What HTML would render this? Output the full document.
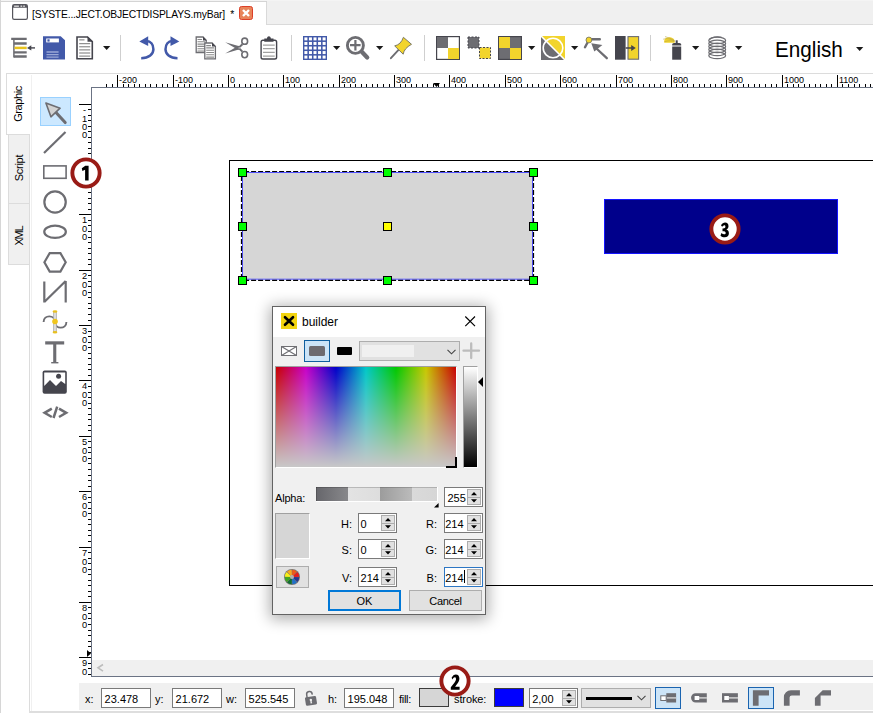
<!DOCTYPE html>
<html><head><meta charset="utf-8"><title>editor</title>
<style>

html,body{margin:0;padding:0;}
body{width:873px;height:713px;overflow:hidden;background:#fff;position:relative;font-family:"Liberation Sans",sans-serif;font-size:11px;color:#000;}
.a{position:absolute;}
svg{position:absolute;overflow:visible;}


.tabstrip{left:0;top:0;width:873px;height:25px;background:#f0f0f0;}
.tabstrip .topline{left:0;top:1px;width:267px;height:1px;background:#d4d4d4;}
.tabstrip .top0{left:0;top:0;width:873px;height:1px;background:#f4f4f4;}
.tabstrip .botline{left:267px;top:24px;width:606px;height:1px;background:#dadada;}
.doctab{left:0;top:2px;width:267px;height:23px;background:#fff;border-right:1px solid #d9d9d9;box-sizing:border-box;}
.doctitle{left:32.3px;top:7.4px;font-size:11.8px;line-height:14px;white-space:nowrap;letter-spacing:-0.2px;color:#000;transform-origin:0 50%;transform:scaleX(0.876);}
.closebtn{left:239px;top:6px;width:14px;height:14px;box-sizing:border-box;background:#e8845a;border:1px solid #dc3f28;border-radius:2.5px;}
.tsep{width:1px;top:35px;height:26px;background:#cfcfcf;}
.dd{width:0;height:0;border-left:3.7px solid transparent;border-right:3.7px solid transparent;border-top:4px solid #1c1c1c;top:46px;}
.lang{left:775.2px;top:36.7px;font-size:22px;line-height:26px;color:#000;white-space:nowrap;transform-origin:0 50%;transform:scaleX(0.94);}
.winedge{left:0;top:0;width:1px;height:713px;background:#d6d6d6;}


.hline73{left:6px;top:73px;width:867px;height:1px;background:#dcdcdc;}
.vline6{left:6px;top:73px;width:1px;height:62px;background:#dcdcdc;}
.vline31{left:31px;top:75px;width:1px;height:638px;background:#f0f0f0;}
.vline29{left:29px;top:264px;width:1px;height:449px;background:#dcdcdc;}
.hline134{left:6px;top:134px;width:24px;height:1px;background:#dcdcdc;}
.vtab{left:8px;width:22px;background:#f0f0f0;border:1px solid #dcdcdc;box-sizing:border-box;}
.vtxt{font-size:11px;line-height:13px;white-space:nowrap;transform:translate(-50%,-50%) rotate(-90deg);color:#000;}
.toolsel{left:40px;top:97px;width:31px;height:29px;box-sizing:border-box;background:#cce8ff;border:1px solid #99d1ff;}


.frameL{left:91px;top:87px;width:1px;height:590px;background:#6b7384;}
.frameT{left:91px;top:87px;width:782px;height:1px;background:#6b7384;}
.frameB{left:91px;top:676px;width:782px;height:1px;background:#6b7384;}
.hscroll{left:92px;top:660px;width:781px;height:16px;background:#f0f0f0;}
.rl{font-size:9px;color:#000;white-space:nowrap;}
.hl{top:74.7px;line-height:11px;}
.vl{left:80px;width:9px;text-align:center;line-height:8.2px;font-size:9.3px;}
.vclip{left:72px;top:88px;width:19px;height:588px;overflow:hidden;}


.page{left:229px;top:160px;width:700px;height:426px;box-sizing:border-box;border:1px solid #000;border-right:none;}
.hd{width:9px;height:9px;box-sizing:border-box;border:1px solid #000;background:#00ff00;}
.badge{width:31px;height:31px;box-sizing:border-box;border:4px solid #991b16;border-radius:50%;background:#fff;}
.badge span{position:absolute;left:0;top:0;width:23px;height:23px;line-height:23px;text-align:center;font-weight:bold;font-size:20px;transform:scaleX(0.78);color:#000;}


.dlg{left:272px;top:306px;width:214px;height:309px;box-sizing:border-box;border:1px solid #636363;background:#f0f0f0;box-shadow:0 2px 14px 2px rgba(0,0,0,0.33);}
.dlgtitle{left:273px;top:307px;width:212px;height:30px;background:#fff;}
.dlgtxt{left:302px;top:315px;font-size:12px;line-height:15px;color:#000;}
.lbl{font-size:11px;line-height:13px;white-space:nowrap;color:#000;}
.spin{box-sizing:border-box;border:1px solid #7a7a7a;background:#fff;height:20px;}
.spin .t{position:absolute;left:2px;top:3px;font-size:11px;line-height:14px;white-space:nowrap;}
.spin .bt{position:absolute;right:1px;top:1px;width:14px;height:16px;box-sizing:border-box;border:1px solid #adadad;background:#e1e1e1;}
.spin .bt:before{content:"";position:absolute;left:0;top:7px;width:12px;height:1px;background:#adadad;}
.spin svg{right:4.7px;top:3.8px;}
.btn{box-sizing:border-box;border:1px solid #adadad;background:#e1e1e1;font-size:11px;text-align:center;color:#000;}
.sunk{box-sizing:border-box;border:1px solid;border-color:#a0a0a0 #fff #fff #a0a0a0;}


.bbar{left:79px;top:683px;width:794px;height:27px;background:#f0f0f0;}
.bline{left:29px;top:711px;width:844px;height:2px;background:#dedede;}
.inp{box-sizing:border-box;border:1px solid #7a7a7a;background:#fff;height:20px;top:688px;font-size:11px;line-height:20px;padding-left:2.6px;white-space:nowrap;}
.sw{box-sizing:border-box;border:1px solid #3c3c3c;top:688px;height:19px;width:30px;}
.bsel{box-sizing:border-box;background:#cce4f7;border:1px solid #1a64b0;top:687px;width:26px;height:22px;}

</style></head>
<body>

<div class="a tabstrip"><div class="a top0"></div><div class="a topline"></div><div class="a botline"></div>
<div class="a doctab"></div></div>
<svg style="left:12px;top:4px" width="16" height="16" viewBox="0 0 16 16">
<rect x="0.6" y="0.7" width="14.8" height="14.6" rx="1.6" fill="#fff" stroke="#55555c" stroke-width="1.2"/>
<path d="M0.6 2.2Q0.6 0.7 2.2 0.7H13.8Q15.4 0.7 15.4 2.2V3.7H0.6z" fill="#55555c"/><rect x="2.1" y="1.5" width="4.8" height="1.4" fill="#d8d8d8"/><rect x="8.5" y="1.5" width="1.7" height="1.4" fill="#d8d8d8"/><rect x="11.2" y="1.5" width="1.7" height="1.4" fill="#d8d8d8"/>
</svg>
<div class="a doctitle">[SYSTE...JECT.OBJECTDISPLAYS.myBar]<span style="margin-left:6px">*</span></div>
<div class="a closebtn"></div><svg style="left:239px;top:6px" width="14" height="14" viewBox="0 0 14 14"><path d="M4 4L10 10M10 4L4 10" stroke="#fff" stroke-width="2.4"/></svg>
<svg style="left:11px;top:36px" width="26" height="24" viewBox="11 36 26 24">
<path d="M13.9 38.2V57.5" stroke="#6d6d72" stroke-width="1.5"/>
<g fill="none" stroke="#6d6d72" stroke-width="2.3"><path d="M11.2 38.9H26.7M13.9 43.5H26.7M13.9 52.3H26.7M13.9 56.5H26.7"/></g>
<path d="M14.6 47.9H26.7" stroke="#e8c31e" stroke-width="2.5"/>
<path d="M29 47.9H35" stroke="#45454d" stroke-width="1.4"/><path d="M27 47.9l4.3-2.7v5.4z" fill="#45454d"/>
</svg>
<svg style="left:43px;top:36px" width="23" height="24" viewBox="43 36 23 24">
<path d="M43 36.2H60.7L65 40.3V59.6H43z" fill="#4259a9"/>
<rect x="46.2" y="38.5" width="12.7" height="3.9" fill="#fff"/><rect x="47.4" y="39.3" width="2.2" height="2.3" fill="#4259a9"/>
<path d="M46.5 52H58.6M46.5 54.7H58.6M46.5 57.2H58.6" stroke="#9aa8d6" stroke-width="1.3"/>
</svg>
<svg style="left:76px;top:36px" width="18" height="24" viewBox="76 36 18 24">
<path d="M77 37H87.5L92.3 41.7V58.8H77z" fill="#fff" stroke="#45454d" stroke-width="1.6"/>
<path d="M87.5 36.5V41.7H93z" fill="#45454d"/>
<path d="M79.2 39.9H84.5M79.2 43.7H90.2M79.2 46.8H90.2M79.2 49.9H90.2M79.2 53H90.2M79.2 56.1H90.2" stroke="#777" stroke-width="1"/>
</svg>
<svg style="left:138px;top:35px" width="18" height="26" viewBox="138 35 18 26">
<path d="M141.2 58.3C149 58.3 153.4 54 153.4 49.2C153.4 44.5 150.5 41.2 146.5 41" fill="none" stroke="#4259a9" stroke-width="2.5"/>
<path d="M139.3 41.4L148.2 36.2V46z" fill="#4259a9"/></svg>
<svg style="left:163px;top:35px" width="18" height="26" viewBox="163 35 18 26">
<path d="M177.5 58.3C169.7 58.3 165.5 54 165.5 49.2C165.5 44.5 168.3 41.2 172.3 41" fill="none" stroke="#4259a9" stroke-width="2.5"/>
<path d="M179.3 41.4L170.5 36.2V46z" fill="#4259a9"/></svg>
<svg style="left:194px;top:36px" width="23" height="24" viewBox="194 36 23 24">
<path d="M196.2 37H203L206.2 40.2V52.5H196.2z" fill="#fff" stroke="#6d6d72" stroke-width="1.3"/><path d="M203 36.6V40.4H206.8z" fill="#45454d"/>
<path d="M197.5 39.5H202M197.5 41.8H205M197.5 44.1H205M197.5 46.4H205M197.5 48.7H205M197.5 51H205" stroke="#8a8a8a" stroke-width="1.1"/>
<path d="M204.8 43H212L215.4 46.4V58.8H204.8z" fill="#fff" stroke="#6d6d72" stroke-width="1.3"/><path d="M212 42.6V46.6H216z" fill="#45454d"/>
<path d="M206.2 45.6H211M206.2 47.9H214M206.2 50.2H214M206.2 52.5H214M206.2 54.8H214M206.2 57.1H214" stroke="#8a8a8a" stroke-width="1.1"/>
</svg>
<svg style="left:225px;top:37px" width="25" height="22" viewBox="225 37 25 22">
<path d="M225.2 42.2L240.4 46.6L238.4 50z" fill="#6d6d72"/>
<path d="M225.2 53.5L240.4 49.1L238.4 45.7z" fill="#6d6d72"/>
<path d="M238.6 47.9L242.4 44.2M238.6 47.9L242.4 51.6" stroke="#6d6d72" stroke-width="2"/>
<ellipse cx="244.7" cy="41.2" rx="2.9" ry="3.1" fill="#fff" stroke="#6d6d72" stroke-width="1.6"/>
<ellipse cx="244.7" cy="54.6" rx="2.9" ry="3.1" fill="#fff" stroke="#6d6d72" stroke-width="1.6"/>
<circle cx="239.2" cy="47.9" r="0.7" fill="#ddd"/>
</svg>
<svg style="left:260px;top:36px" width="18" height="24" viewBox="260 36 18 24">
<rect x="261.1" y="40.2" width="15.5" height="18.8" rx="1.8" fill="#fff" stroke="#45454d" stroke-width="1.4"/>
<path d="M264.3 41.7V38.6H266.9C267.4 35.6 270.4 35.6 270.9 38.6H273.5V41.7z" fill="#45454d"/>
<path d="M263 45.2H274.7M263 48.6H274.7M263 52.3H274.7M263 56.1H274.7" stroke="#a2a2a2" stroke-width="1.2"/>
</svg>
<svg style="left:303px;top:36px" width="24" height="24" viewBox="0 0 24 24"><rect width="24" height="24" fill="#4259a9"/><rect x="1.4" y="1.4" width="3" height="3" fill="#fff"/><rect x="5.95" y="1.4" width="3" height="3" fill="#fff"/><rect x="10.5" y="1.4" width="3" height="3" fill="#fff"/><rect x="15.05" y="1.4" width="3" height="3" fill="#fff"/><rect x="19.6" y="1.4" width="3" height="3" fill="#fff"/><rect x="1.4" y="5.95" width="3" height="3" fill="#fff"/><rect x="5.95" y="5.95" width="3" height="3" fill="#fff"/><rect x="10.5" y="5.95" width="3" height="3" fill="#fff"/><rect x="15.05" y="5.95" width="3" height="3" fill="#fff"/><rect x="19.6" y="5.95" width="3" height="3" fill="#fff"/><rect x="1.4" y="10.5" width="3" height="3" fill="#fff"/><rect x="5.95" y="10.5" width="3" height="3" fill="#fff"/><rect x="10.5" y="10.5" width="3" height="3" fill="#fff"/><rect x="15.05" y="10.5" width="3" height="3" fill="#fff"/><rect x="19.6" y="10.5" width="3" height="3" fill="#fff"/><rect x="1.4" y="15.05" width="3" height="3" fill="#fff"/><rect x="5.95" y="15.05" width="3" height="3" fill="#fff"/><rect x="10.5" y="15.05" width="3" height="3" fill="#fff"/><rect x="15.05" y="15.05" width="3" height="3" fill="#fff"/><rect x="19.6" y="15.05" width="3" height="3" fill="#fff"/><rect x="1.4" y="19.6" width="3" height="3" fill="#fff"/><rect x="5.95" y="19.6" width="3" height="3" fill="#fff"/><rect x="10.5" y="19.6" width="3" height="3" fill="#fff"/><rect x="15.05" y="19.6" width="3" height="3" fill="#fff"/><rect x="19.6" y="19.6" width="3" height="3" fill="#fff"/></svg>
<svg style="left:345px;top:35px" width="26" height="26" viewBox="345 35 26 26">
<circle cx="355.4" cy="45.4" r="8" fill="#fff" stroke="#6d6d72" stroke-width="2.9"/>
<path d="M361.8 51.8L367.2 57.4" stroke="#6d6d72" stroke-width="4.3" stroke-linecap="round"/>
<path d="M355.4 40V50.4M350 45.2H360.6" stroke="#6d6d72" stroke-width="2.2"/>
</svg>
<svg style="left:389px;top:36px" width="24" height="24" viewBox="389 36 24 24">
<path d="M390.9 58.2L399 49.4" stroke="#6d6d72" stroke-width="1.9" stroke-linecap="round"/>
<path d="M394.7 45.9L403.2 54.2Q404 48.4 411.5 44.3L403.4 37.3Q400.9 44.6 394.7 45.9z" fill="#f2d42c" stroke="#7c7a66" stroke-width="1" stroke-linejoin="round"/>
</svg>
<svg style="left:436px;top:36px" width="24" height="24" viewBox="0 0 24 24">
<rect x="0.6" y="0.6" width="22.8" height="22.8" fill="#fff" stroke="#45454d" stroke-width="1.2"/>
<rect x="1" y="1" width="11" height="11" fill="#6d6d72"/><rect x="12" y="12" width="11" height="11" fill="#f2d42c"/>
</svg>
<svg style="left:467px;top:36px" width="25" height="24" viewBox="0 0 25 24">
<rect x="1" y="1" width="11" height="11" fill="#6d6d72" stroke="#45454d" stroke-width="1" stroke-dasharray="2 1.5"/>
<rect x="12.5" y="11.5" width="11" height="11" fill="#f2d42c" stroke="#45454d" stroke-width="1" stroke-dasharray="2 1.5"/>
</svg>
<svg style="left:498px;top:36px" width="24" height="24" viewBox="0 0 24 24">
<rect x="0.6" y="0.6" width="22.8" height="22.8" fill="#6d6d72" stroke="#45454d" stroke-width="1.2"/>
<rect x="1" y="1" width="11" height="11" fill="#f2d42c"/><rect x="12" y="12" width="11" height="11" fill="#f2d42c"/>
</svg>
<svg style="left:541px;top:36px" width="24" height="24" viewBox="0 0 24 24">
<path d="M0 0H24V24z" fill="#f2d42c"/><path d="M0 0V24H24z" fill="#6d6d72"/>
<circle cx="12" cy="12" r="9.8" fill="none" stroke="#fff" stroke-width="1.6"/>
<path d="M0 0L24 24" stroke="#fff" stroke-width="1.6"/>
</svg>
<svg style="left:584px;top:36px" width="25" height="24" viewBox="584 36 25 24">
<path d="M585 47.2L588.9 40M588.9 39.3H599.8" stroke="#6d6d72" stroke-width="2.4" fill="none" stroke-linecap="round"/>
<circle cx="588.9" cy="40" r="2.9" fill="#f2d42c" stroke="#7c7a66" stroke-width="0.9"/>
<path d="M597 49L606.8 58.2" stroke="#6d6d72" stroke-width="2.3" stroke-linecap="round"/>
<path d="M591.3 43.2L602.4 45L594.3 51.5z" fill="#6d6d72"/>
</svg>
<svg style="left:615px;top:36px" width="24" height="24" viewBox="615 36 24 24">
<rect x="615" y="36" width="10.6" height="23.7" fill="#45454d"/>
<rect x="628" y="36.6" width="10.6" height="22.6" fill="#f2d42c" stroke="#6d6d72" stroke-width="1.1"/>
<path d="M625.6 48H632" stroke="#45454d" stroke-width="1.5"/><path d="M635.8 48L631.2 45V51z" fill="#45454d"/>
</svg>
<svg style="left:662px;top:36px" width="21" height="24" viewBox="662 36 21 24">
<rect x="672.2" y="46.5" width="9" height="13.2" fill="#45454d"/>
<path d="M672.2 45.6V44.6Q672.2 43 674 43H679.4Q681.2 43 681.2 44.6V45.6z" fill="#45454d"/>
<rect x="675.7" y="40.3" width="2" height="3" fill="#45454d"/>
<path d="M664.5 42.8C663 40 666 36.8 670 37.2C673.5 37.6 675.5 40.5 674.6 42.8z" fill="#f2d42c"/>
<path d="M663.2 39.2C667 38 671 39 674.5 41M665 36.6C668 37.5 672 39 674.5 40.5M664.5 41.8C668 40.5 671 40.5 674 41.5" stroke="#b9a646" stroke-width="0.6" fill="none"/>
</svg>
<svg style="left:708px;top:36px" width="20" height="24" viewBox="708 36 20 24"><ellipse cx="717.2" cy="40.4" rx="8.4" ry="3.3" fill="none" stroke="#6d6d72" stroke-width="1.25"/><ellipse cx="717.2" cy="43.4" rx="8.4" ry="3.3" fill="none" stroke="#6d6d72" stroke-width="1.25"/><ellipse cx="717.2" cy="46.4" rx="8.4" ry="3.3" fill="none" stroke="#6d6d72" stroke-width="1.25"/><ellipse cx="717.2" cy="49.4" rx="8.4" ry="3.3" fill="none" stroke="#6d6d72" stroke-width="1.25"/><ellipse cx="717.2" cy="52.4" rx="8.4" ry="3.3" fill="none" stroke="#6d6d72" stroke-width="1.25"/><ellipse cx="717.2" cy="55.4" rx="8.4" ry="3.3" fill="none" stroke="#6d6d72" stroke-width="1.25"/><path d="M721.6 37.3C717 36.4 711.5 37.2 709.5 39.5" fill="none" stroke="#6d6d72" stroke-width="1.2"/></svg>
<svg style="left:102.9px;top:46px" width="8" height="5" viewBox="0 0 8 5"><path d="M0 0H7.3L3.65 4.1z" fill="#1a1a1a"/></svg>
<svg style="left:332.9px;top:46px" width="8" height="5" viewBox="0 0 8 5"><path d="M0 0H7.3L3.65 4.1z" fill="#1a1a1a"/></svg>
<svg style="left:375.9px;top:46px" width="8" height="5" viewBox="0 0 8 5"><path d="M0 0H7.3L3.65 4.1z" fill="#1a1a1a"/></svg>
<svg style="left:527.9px;top:46px" width="8" height="5" viewBox="0 0 8 5"><path d="M0 0H7.3L3.65 4.1z" fill="#1a1a1a"/></svg>
<svg style="left:571.2px;top:46px" width="8" height="5" viewBox="0 0 8 5"><path d="M0 0H7.3L3.65 4.1z" fill="#1a1a1a"/></svg>
<svg style="left:692px;top:46px" width="8" height="5" viewBox="0 0 8 5"><path d="M0 0H7.3L3.65 4.1z" fill="#1a1a1a"/></svg>
<svg style="left:734.8px;top:46px" width="8" height="5" viewBox="0 0 8 5"><path d="M0 0H7.3L3.65 4.1z" fill="#1a1a1a"/></svg>
<svg style="left:855.6px;top:47px" width="8" height="5" viewBox="0 0 8 5"><path d="M0 0H7.3L3.65 4.1z" fill="#1a1a1a"/></svg>
<div class="a tsep" style="left:120px"></div>
<div class="a tsep" style="left:291px"></div>
<div class="a tsep" style="left:424px"></div>
<div class="a tsep" style="left:650px"></div>
<div class="a lang">English</div>
<div class="a winedge"></div>
<div class="a hline73"></div><div class="a vline6"></div>
<div class="a vtab" style="top:134px;height:70px"></div>
<div class="a vtab" style="top:203px;height:62px"></div>
<div class="a vline31"></div><div class="a hline134"></div><div class="a vline29"></div>
<div class="a vtxt" style="left:17.5px;top:103.6px;letter-spacing:-0.4px">Graphic</div>
<div class="a vtxt" style="left:18.5px;top:168px;letter-spacing:-0.3px">Script</div>
<div class="a vtxt" style="left:18.5px;top:235.8px;letter-spacing:-1.2px">XML</div>
<div class="a toolsel"></div>
<svg style="left:40px;top:97px" width="31" height="29" viewBox="40 97 31 29">
<path d="M56 112.5L65.2 122.6" stroke="#6d6d72" stroke-width="3" stroke-linecap="round"/>
<path d="M45.9 103.1L60.1 108.2L50.9 116.8z" fill="#d2d2d2" stroke="#6d6d72" stroke-width="1.6" stroke-linejoin="round"/>
</svg>
<svg style="left:40px;top:126px" width="31" height="300" viewBox="40 126 31 300">
<path d="M44 153L65.5 132" stroke="#6d6d72" stroke-width="2.2"/>
<rect x="43.8" y="165.9" width="22.3" height="12.4" fill="#fff" stroke="#6d6d72" stroke-width="1.6"/>
<circle cx="55.05" cy="202" r="10.7" fill="none" stroke="#6d6d72" stroke-width="2.2"/>
<ellipse cx="55.05" cy="231.8" rx="10.8" ry="6.1" fill="none" stroke="#6d6d72" stroke-width="2.2"/>
<path d="M44.4 262.3L49.7 253.1H60.4L65.7 262.3L60.4 271.6H49.7z" fill="none" stroke="#6d6d72" stroke-width="2.2"/>
<path d="M44.3 302.5V281.5M44.3 302L65.7 281M65.7 281V302.5" fill="none" stroke="#6d6d72" stroke-width="2.2"/>
<path d="M43.6 322C43.6 314.5 55 314.5 55 322C55 329.5 66.4 329.5 66.4 322" fill="none" stroke="#6d6d72" stroke-width="1.9"/>
<rect x="53.6" y="311.5" width="2.8" height="20.5" fill="#dcdcdc" stroke="#a8a8a8" stroke-width="0.7"/>
<ellipse cx="55" cy="311.5" rx="2.4" ry="1.3" fill="#e8c020"/><ellipse cx="55" cy="332.2" rx="2.4" ry="1.3" fill="#e8c020"/>
<circle cx="55" cy="321.5" r="2.8" fill="#f0c61e"/>
<rect x="45.2" y="341.3" width="19" height="3.2" fill="#6d6d72"/><rect x="53.2" y="343" width="3.1" height="19.4" fill="#6d6d72"/><rect x="51.2" y="362" width="7.2" height="1.4" fill="#6d6d72"/>
<rect x="42.6" y="370.5" width="24.2" height="23.3" rx="2" fill="#45454d"/>
<path d="M44.2 372.5H65.2V384L61 381L56 386L50 380L44.2 386z" fill="#fff"/>
<circle cx="58.6" cy="376.2" r="2.5" fill="#45454d"/>
<path d="M51.8 408.6L44.6 412.8L51.8 417M59 408.6L66.2 412.8L59 417M57.2 406.6L53.5 418" fill="none" stroke="#6d6d72" stroke-width="2.5"/>
</svg>
<svg style="left:0;top:0" width="873" height="90" viewBox="0 0 873 90" shape-rendering="crispEdges"><g fill="#000"><rect x="106" y="84" width="1" height="3"/><rect x="112" y="84" width="1" height="3"/><rect x="117" y="75" width="1" height="12"/><rect x="123" y="84" width="1" height="3"/><rect x="128" y="84" width="1" height="3"/><rect x="134" y="84" width="1" height="3"/><rect x="139" y="84" width="1" height="3"/><rect x="145" y="84" width="1" height="3"/><rect x="150" y="84" width="1" height="3"/><rect x="156" y="84" width="1" height="3"/><rect x="162" y="84" width="1" height="3"/><rect x="167" y="84" width="1" height="3"/><rect x="173" y="75" width="1" height="12"/><rect x="178" y="84" width="1" height="3"/><rect x="184" y="84" width="1" height="3"/><rect x="189" y="84" width="1" height="3"/><rect x="195" y="84" width="1" height="3"/><rect x="200" y="84" width="1" height="3"/><rect x="206" y="84" width="1" height="3"/><rect x="211" y="84" width="1" height="3"/><rect x="217" y="84" width="1" height="3"/><rect x="222" y="84" width="1" height="3"/><rect x="228" y="75" width="1" height="12"/><rect x="234" y="84" width="1" height="3"/><rect x="239" y="84" width="1" height="3"/><rect x="245" y="84" width="1" height="3"/><rect x="250" y="84" width="1" height="3"/><rect x="256" y="84" width="1" height="3"/><rect x="261" y="84" width="1" height="3"/><rect x="267" y="84" width="1" height="3"/><rect x="272" y="84" width="1" height="3"/><rect x="278" y="84" width="1" height="3"/><rect x="283" y="75" width="1" height="12"/><rect x="289" y="84" width="1" height="3"/><rect x="294" y="84" width="1" height="3"/><rect x="300" y="84" width="1" height="3"/><rect x="306" y="84" width="1" height="3"/><rect x="311" y="84" width="1" height="3"/><rect x="317" y="84" width="1" height="3"/><rect x="322" y="84" width="1" height="3"/><rect x="328" y="84" width="1" height="3"/><rect x="333" y="84" width="1" height="3"/><rect x="339" y="75" width="1" height="12"/><rect x="344" y="84" width="1" height="3"/><rect x="350" y="84" width="1" height="3"/><rect x="355" y="84" width="1" height="3"/><rect x="361" y="84" width="1" height="3"/><rect x="366" y="84" width="1" height="3"/><rect x="372" y="84" width="1" height="3"/><rect x="377" y="84" width="1" height="3"/><rect x="383" y="84" width="1" height="3"/><rect x="389" y="84" width="1" height="3"/><rect x="394" y="75" width="1" height="12"/><rect x="400" y="84" width="1" height="3"/><rect x="405" y="84" width="1" height="3"/><rect x="411" y="84" width="1" height="3"/><rect x="416" y="84" width="1" height="3"/><rect x="422" y="84" width="1" height="3"/><rect x="427" y="84" width="1" height="3"/><rect x="433" y="84" width="1" height="3"/><rect x="438" y="84" width="1" height="3"/><rect x="444" y="84" width="1" height="3"/><rect x="449" y="75" width="1" height="12"/><rect x="455" y="84" width="1" height="3"/><rect x="461" y="84" width="1" height="3"/><rect x="466" y="84" width="1" height="3"/><rect x="472" y="84" width="1" height="3"/><rect x="477" y="84" width="1" height="3"/><rect x="483" y="84" width="1" height="3"/><rect x="488" y="84" width="1" height="3"/><rect x="494" y="84" width="1" height="3"/><rect x="499" y="84" width="1" height="3"/><rect x="505" y="75" width="1" height="12"/><rect x="510" y="84" width="1" height="3"/><rect x="516" y="84" width="1" height="3"/><rect x="521" y="84" width="1" height="3"/><rect x="527" y="84" width="1" height="3"/><rect x="532" y="84" width="1" height="3"/><rect x="538" y="84" width="1" height="3"/><rect x="544" y="84" width="1" height="3"/><rect x="549" y="84" width="1" height="3"/><rect x="555" y="84" width="1" height="3"/><rect x="560" y="75" width="1" height="12"/><rect x="566" y="84" width="1" height="3"/><rect x="571" y="84" width="1" height="3"/><rect x="577" y="84" width="1" height="3"/><rect x="582" y="84" width="1" height="3"/><rect x="588" y="84" width="1" height="3"/><rect x="593" y="84" width="1" height="3"/><rect x="599" y="84" width="1" height="3"/><rect x="604" y="84" width="1" height="3"/><rect x="610" y="84" width="1" height="3"/><rect x="616" y="75" width="1" height="12"/><rect x="621" y="84" width="1" height="3"/><rect x="627" y="84" width="1" height="3"/><rect x="632" y="84" width="1" height="3"/><rect x="638" y="84" width="1" height="3"/><rect x="643" y="84" width="1" height="3"/><rect x="649" y="84" width="1" height="3"/><rect x="654" y="84" width="1" height="3"/><rect x="660" y="84" width="1" height="3"/><rect x="665" y="84" width="1" height="3"/><rect x="671" y="75" width="1" height="12"/><rect x="676" y="84" width="1" height="3"/><rect x="682" y="84" width="1" height="3"/><rect x="687" y="84" width="1" height="3"/><rect x="693" y="84" width="1" height="3"/><rect x="699" y="84" width="1" height="3"/><rect x="704" y="84" width="1" height="3"/><rect x="710" y="84" width="1" height="3"/><rect x="715" y="84" width="1" height="3"/><rect x="721" y="84" width="1" height="3"/><rect x="726" y="75" width="1" height="12"/><rect x="732" y="84" width="1" height="3"/><rect x="737" y="84" width="1" height="3"/><rect x="743" y="84" width="1" height="3"/><rect x="748" y="84" width="1" height="3"/><rect x="754" y="84" width="1" height="3"/><rect x="759" y="84" width="1" height="3"/><rect x="765" y="84" width="1" height="3"/><rect x="771" y="84" width="1" height="3"/><rect x="776" y="84" width="1" height="3"/><rect x="782" y="75" width="1" height="12"/><rect x="787" y="84" width="1" height="3"/><rect x="793" y="84" width="1" height="3"/><rect x="798" y="84" width="1" height="3"/><rect x="804" y="84" width="1" height="3"/><rect x="809" y="84" width="1" height="3"/><rect x="815" y="84" width="1" height="3"/><rect x="820" y="84" width="1" height="3"/><rect x="826" y="84" width="1" height="3"/><rect x="831" y="84" width="1" height="3"/><rect x="837" y="75" width="1" height="12"/><rect x="842" y="84" width="1" height="3"/><rect x="848" y="84" width="1" height="3"/><rect x="854" y="84" width="1" height="3"/><rect x="859" y="84" width="1" height="3"/><rect x="865" y="84" width="1" height="3"/><rect x="870" y="84" width="1" height="3"/></g></svg>
<div class="a rl hl" style="left:119px">-200</div>
<div class="a rl hl" style="left:175px">-100</div>
<div class="a rl hl" style="left:230px">0</div>
<div class="a rl hl" style="left:285px">100</div>
<div class="a rl hl" style="left:341px">200</div>
<div class="a rl hl" style="left:396px">300</div>
<div class="a rl hl" style="left:451px">400</div>
<div class="a rl hl" style="left:507px">500</div>
<div class="a rl hl" style="left:562px">600</div>
<div class="a rl hl" style="left:618px">700</div>
<div class="a rl hl" style="left:673px">800</div>
<div class="a rl hl" style="left:728px">900</div>
<div class="a rl hl" style="left:784px">1000</div>
<div class="a rl hl" style="left:839px">1100</div>
<svg style="left:0;top:0" width="95" height="680" viewBox="0 0 95 680" shape-rendering="crispEdges"><g fill="#000"><rect x="79" y="104" width="12" height="1"/><rect x="88" y="109" width="3" height="1"/><rect x="88" y="115" width="3" height="1"/><rect x="88" y="120" width="3" height="1"/><rect x="88" y="126" width="3" height="1"/><rect x="88" y="131" width="3" height="1"/><rect x="88" y="137" width="3" height="1"/><rect x="88" y="142" width="3" height="1"/><rect x="88" y="148" width="3" height="1"/><rect x="88" y="153" width="3" height="1"/><rect x="79" y="159" width="12" height="1"/><rect x="88" y="165" width="3" height="1"/><rect x="88" y="170" width="3" height="1"/><rect x="88" y="176" width="3" height="1"/><rect x="88" y="181" width="3" height="1"/><rect x="88" y="187" width="3" height="1"/><rect x="88" y="192" width="3" height="1"/><rect x="88" y="198" width="3" height="1"/><rect x="88" y="203" width="3" height="1"/><rect x="88" y="209" width="3" height="1"/><rect x="79" y="214" width="12" height="1"/><rect x="88" y="220" width="3" height="1"/><rect x="88" y="225" width="3" height="1"/><rect x="88" y="231" width="3" height="1"/><rect x="88" y="237" width="3" height="1"/><rect x="88" y="242" width="3" height="1"/><rect x="88" y="248" width="3" height="1"/><rect x="88" y="253" width="3" height="1"/><rect x="88" y="259" width="3" height="1"/><rect x="88" y="264" width="3" height="1"/><rect x="79" y="270" width="12" height="1"/><rect x="88" y="275" width="3" height="1"/><rect x="88" y="281" width="3" height="1"/><rect x="88" y="286" width="3" height="1"/><rect x="88" y="292" width="3" height="1"/><rect x="88" y="297" width="3" height="1"/><rect x="88" y="303" width="3" height="1"/><rect x="88" y="308" width="3" height="1"/><rect x="88" y="314" width="3" height="1"/><rect x="88" y="320" width="3" height="1"/><rect x="79" y="325" width="12" height="1"/><rect x="88" y="331" width="3" height="1"/><rect x="88" y="336" width="3" height="1"/><rect x="88" y="342" width="3" height="1"/><rect x="88" y="347" width="3" height="1"/><rect x="88" y="353" width="3" height="1"/><rect x="88" y="358" width="3" height="1"/><rect x="88" y="364" width="3" height="1"/><rect x="88" y="369" width="3" height="1"/><rect x="88" y="375" width="3" height="1"/><rect x="79" y="380" width="12" height="1"/><rect x="88" y="386" width="3" height="1"/><rect x="88" y="392" width="3" height="1"/><rect x="88" y="397" width="3" height="1"/><rect x="88" y="403" width="3" height="1"/><rect x="88" y="408" width="3" height="1"/><rect x="88" y="414" width="3" height="1"/><rect x="88" y="419" width="3" height="1"/><rect x="88" y="425" width="3" height="1"/><rect x="88" y="430" width="3" height="1"/><rect x="79" y="436" width="12" height="1"/><rect x="88" y="441" width="3" height="1"/><rect x="88" y="447" width="3" height="1"/><rect x="88" y="452" width="3" height="1"/><rect x="88" y="458" width="3" height="1"/><rect x="88" y="463" width="3" height="1"/><rect x="88" y="469" width="3" height="1"/><rect x="88" y="475" width="3" height="1"/><rect x="88" y="480" width="3" height="1"/><rect x="88" y="486" width="3" height="1"/><rect x="79" y="491" width="12" height="1"/><rect x="88" y="497" width="3" height="1"/><rect x="88" y="502" width="3" height="1"/><rect x="88" y="508" width="3" height="1"/><rect x="88" y="513" width="3" height="1"/><rect x="88" y="519" width="3" height="1"/><rect x="88" y="524" width="3" height="1"/><rect x="88" y="530" width="3" height="1"/><rect x="88" y="535" width="3" height="1"/><rect x="88" y="541" width="3" height="1"/><rect x="79" y="547" width="12" height="1"/><rect x="88" y="552" width="3" height="1"/><rect x="88" y="558" width="3" height="1"/><rect x="88" y="563" width="3" height="1"/><rect x="88" y="569" width="3" height="1"/><rect x="88" y="574" width="3" height="1"/><rect x="88" y="580" width="3" height="1"/><rect x="88" y="585" width="3" height="1"/><rect x="88" y="591" width="3" height="1"/><rect x="88" y="596" width="3" height="1"/><rect x="79" y="602" width="12" height="1"/><rect x="88" y="607" width="3" height="1"/><rect x="88" y="613" width="3" height="1"/><rect x="88" y="618" width="3" height="1"/><rect x="88" y="624" width="3" height="1"/><rect x="88" y="630" width="3" height="1"/><rect x="88" y="635" width="3" height="1"/><rect x="88" y="641" width="3" height="1"/><rect x="88" y="646" width="3" height="1"/><rect x="88" y="652" width="3" height="1"/><rect x="79" y="657" width="12" height="1"/><rect x="88" y="663" width="3" height="1"/><rect x="88" y="668" width="3" height="1"/><rect x="88" y="674" width="3" height="1"/></g></svg>
<div class="a vclip"><div class="a rl vl" style="left:8px;top:18.4px">-<br>1<br>0<br>0</div><div class="a rl vl" style="left:8px;top:73.4px">0</div><div class="a rl vl" style="left:8px;top:128.4px">1<br>0<br>0</div><div class="a rl vl" style="left:8px;top:184.4px">2<br>0<br>0</div><div class="a rl vl" style="left:8px;top:239.4px">3<br>0<br>0</div><div class="a rl vl" style="left:8px;top:294.4px">4<br>0<br>0</div><div class="a rl vl" style="left:8px;top:350.4px">5<br>0<br>0</div><div class="a rl vl" style="left:8px;top:405.4px">6<br>0<br>0</div><div class="a rl vl" style="left:8px;top:461.4px">7<br>0<br>0</div><div class="a rl vl" style="left:8px;top:516.4px">8<br>0<br>0</div><div class="a rl vl" style="left:8px;top:571.4px">9<br>0<br>0</div></div>
<div class="a hscroll"></div>
<svg style="left:97px;top:664px" width="7" height="8" viewBox="0 0 7 8"><path d="M6 0.5L1 3.8L6 7.2" fill="none" stroke="#bdbdbd" stroke-width="1.6"/></svg>
<div class="a frameL"></div><div class="a frameT"></div><div class="a frameB"></div>
<svg style="left:433px;top:83px" width="7" height="4" viewBox="0 0 7 4"><path d="M0 0H7L3.5 4z" fill="#000"/></svg>
<svg style="left:87px;top:650px" width="4" height="7" viewBox="0 0 4 7"><path d="M0 0L4 3.5L0 7z" fill="#000"/></svg>
<div class="a page"></div>
<svg style="left:236px;top:166px" width="304" height="122" viewBox="236 166 304 122">
<rect x="242.5" y="172.5" width="290" height="106.7" fill="#d6d6d6" stroke="#5050ff" stroke-width="1"/>
<g fill="none" stroke="#000" stroke-width="1.2" stroke-dasharray="5 2">
<path d="M241 171.5H534" stroke-dashoffset="3.9"/><path d="M241 280.4H534" stroke-dashoffset="3.9"/>
<path d="M241.5 171V281" stroke-dashoffset="2"/><path d="M533.5 171V281" stroke-dashoffset="2"/></g>
</svg>
<div class="a hd" style="left:238px;top:168px"></div>
<div class="a hd" style="left:383px;top:168px"></div>
<div class="a hd" style="left:529px;top:168px"></div>
<div class="a hd" style="left:238px;top:222px"></div>
<div class="a hd" style="left:529px;top:222px"></div>
<div class="a hd" style="left:238px;top:276px"></div>
<div class="a hd" style="left:383px;top:276px"></div>
<div class="a hd" style="left:529px;top:276px"></div>
<div class="a hd" style="left:383px;top:222px;background:#ffff00"></div>
<div class="a" style="left:604px;top:199px;width:234px;height:55px;box-sizing:border-box;background:#00008b;border:1px solid #1414ff"></div>
<svg style="left:709.05px;top:213.05px" width="32" height="32" viewBox="0 0 32 32"><circle cx="16" cy="16" r="13.65" fill="#fff" stroke="#991b16" stroke-width="3.9"/><path transform="translate(11.5 9.55)" d="M0.5 2.7C1.7 0.9 3 0 4.6 0C6.8 0 8 1.4 8 3.6C8 5.2 7.2 6.4 5.8 7C7.4 7.5 8.4 8.8 8.4 10.6C8.4 13.2 6.8 14.7 4.2 14.7C2.6 14.7 1.2 14.2 0 13.2L0.9 10.5C1.8 11.3 2.8 11.8 3.7 11.8C4.7 11.8 5.2 11.3 5.2 10.4C5.2 9.2 4.4 8.6 2.6 8.6H2V5.9H2.6C4.2 5.9 4.9 5.3 4.9 4.2C4.9 3.3 4.5 2.8 3.8 2.8C3.1 2.8 2.4 3.3 1.6 4.3z" fill="#000"/></svg>
<svg style="left:70.2px;top:156.85px" width="32" height="32" viewBox="0 0 32 32"><circle cx="16" cy="16" r="13.65" fill="#fff" stroke="#991b16" stroke-width="3.9"/><path transform="translate(11.8 8.8)" d="M3.5 0H6.8V14.8H3.3V3.9L0.6 5.3L0 2.5z" fill="#000"/></svg>
<div class="a dlg"></div><div class="a dlgtitle"></div>
<svg style="left:281px;top:313px" width="16" height="16" viewBox="0 0 16 16"><rect width="16" height="16" fill="#f2d40f"/>
<path d="M4 4.2L12 11.8M12 4.2L4 11.8" stroke="#000" stroke-width="2.6" stroke-linecap="round"/></svg>
<div class="a dlgtxt">builder</div>
<svg style="left:465px;top:316px" width="11" height="11" viewBox="0 0 11 11"><path d="M0.3 0.5L10 10.2M10 0.5L0.3 10.2" stroke="#000" stroke-width="1.15"/></svg>
<svg style="left:281px;top:346px" width="16" height="10" viewBox="0 0 16 10"><rect x="0.5" y="0.5" width="15" height="9" fill="#fff" stroke="#707074" stroke-width="1"/><path d="M0.5 0.5L15.5 9.5M15.5 0.5L0.5 9.5" stroke="#707074" stroke-width="1.2"/></svg>
<div class="a" style="left:304px;top:340px;width:26px;height:22px;box-sizing:border-box;background:#cce4f7;border:1px solid #0f5e9e"></div>
<div class="a" style="left:309px;top:346px;width:16px;height:10px;background:#6d6b70;border-radius:1.5px"></div>
<div class="a" style="left:337.2px;top:346.8px;width:15.2px;height:8.2px;background:#000;border-radius:1px"></div>
<div class="a" style="left:359px;top:341px;width:101px;height:20px;box-sizing:border-box;background:#e1e1e1;border:1px solid #adadad"></div>
<div class="a" style="left:362px;top:345px;width:52px;height:12px;background:#f0f0f0"></div>
<svg style="left:447px;top:349px" width="9" height="6" viewBox="0 0 9 6"><path d="M0.5 0.8L4.5 4.8L8.5 0.8" fill="none" stroke="#444" stroke-width="1.1"/></svg>
<svg style="left:463px;top:343px" width="17" height="16" viewBox="0 0 17 16"><path d="M8.2 0.5V15M0.5 7.7H16" stroke="#bcbcbc" stroke-width="2.3" stroke-linecap="round"/></svg>
<div class="a sunk" style="left:275px;top:366px;width:182px;height:102px"><div class="a" style="left:0;top:0;width:180px;height:100px;background:linear-gradient(to bottom,rgba(200,200,200,0),rgba(200,200,200,1)),linear-gradient(to right,rgb(200,0,0),rgb(200,0,200),rgb(0,0,200),rgb(0,200,200),rgb(0,200,0),rgb(200,200,0),rgb(200,0,0))"></div></div>
<svg style="left:445px;top:456px" width="13" height="13" viewBox="0 0 13 13"><path d="M1 11H11V1" fill="none" stroke="#000" stroke-width="2"/></svg>
<div class="a sunk" style="left:463px;top:366px;width:15px;height:102px"><div class="a" style="left:0;top:0;width:13px;height:100px;background:linear-gradient(to bottom,#fff,#000)"></div></div>
<svg style="left:478px;top:377px" width="5" height="10" viewBox="0 0 5 10"><path d="M5 0V10L0 5z" fill="#000"/></svg>
<div class="a lbl" style="left:275px;top:492px;letter-spacing:-0.2px">Alpha:</div>
<div class="a" style="left:316px;top:487px;width:32px;height:14px;background:linear-gradient(to right,#66666b,#88888b)"></div>
<div class="a" style="left:348px;top:487px;width:32px;height:14px;background:linear-gradient(to right,#e3e3e3,#dddddd)"></div>
<div class="a" style="left:380px;top:487px;width:32px;height:14px;background:linear-gradient(to right,#9c9c9c,#bbbbbb)"></div>
<div class="a" style="left:412px;top:487px;width:25px;height:14px;background:linear-gradient(to right,#dadada,#d6d6d6)"></div>
<div class="a" style="left:316px;top:487px;width:121px;height:1px;background:rgba(0,0,0,0.18)"></div><div class="a" style="left:316px;top:487px;width:1px;height:14px;background:rgba(0,0,0,0.18)"></div>
<div class="a" style="left:316px;top:501px;width:122px;height:1px;background:#fff"></div><div class="a" style="left:437px;top:487px;width:1px;height:15px;background:#fff"></div>
<svg style="left:433.5px;top:502.6px" width="5" height="5" viewBox="0 0 5 5"><path d="M4.6 0V4.6H0z" fill="#000"/></svg>
<div class="a spin" style="left:444px;top:487px;width:39px;height:20px;"><span class="t" style="left:2.5px">255</span><div class="bt"></div><svg width="6" height="11" viewBox="0 0 6 11"><path d="M0 3.2L3 0L6 3.2zM0 7.3L3 10.5L6 7.3z" fill="#000"/></svg></div>
<div class="a sunk" style="left:275px;top:513px;width:35px;height:46px;background:#d6d6d6"></div>
<div class="a btn" style="left:276px;top:566px;width:33px;height:22px"></div>
<svg style="left:284px;top:569px" width="16" height="16" viewBox="-8 -8 16 16"><circle r="8" fill="#777"/><path d="M0 0L0.32 -7.29A7.3 7.3 0 0 1 4.93 -5.38z" fill="#f05a18"/><path d="M0 0L5.38 -4.93A7.3 7.3 0 0 1 7.29 -0.32z" fill="#e81c1c"/><path d="M0 0L7.29 0.32A7.3 7.3 0 0 1 5.38 4.93z" fill="#283890"/><path d="M0 0L4.93 5.38A7.3 7.3 0 0 1 0.32 7.29z" fill="#2070c8"/><path d="M0 0L-0.32 7.29A7.3 7.3 0 0 1 -4.93 5.38z" fill="#107030"/><path d="M0 0L-5.38 4.93A7.3 7.3 0 0 1 -7.29 0.32z" fill="#40a820"/><path d="M0 0L-7.29 -0.32A7.3 7.3 0 0 1 -5.38 -4.93z" fill="#f8f018"/><path d="M0 0L-4.93 -5.38A7.3 7.3 0 0 1 -0.32 -7.29z" fill="#f8a820"/><circle r="2" fill="#b0b0b0"/></svg>
<div class="a lbl" style="left:340px;top:518px;width:12px;text-align:right">H:</div>
<div class="a spin" style="left:358px;top:513px;width:39px;height:20px;"><span class="t" style="left:1.6px">0</span><div class="bt"></div><svg width="6" height="11" viewBox="0 0 6 11"><path d="M0 3.2L3 0L6 3.2zM0 7.3L3 10.5L6 7.3z" fill="#000"/></svg></div>
<div class="a lbl" style="left:425px;top:518px;width:12px;text-align:right">R:</div>
<div class="a spin" style="left:444px;top:513px;width:39px;height:20px;"><span class="t" style="left:0.2px">214</span><div class="bt"></div><svg width="6" height="11" viewBox="0 0 6 11"><path d="M0 3.2L3 0L6 3.2zM0 7.3L3 10.5L6 7.3z" fill="#000"/></svg></div>
<div class="a lbl" style="left:340px;top:544px;width:12px;text-align:right">S:</div>
<div class="a spin" style="left:358px;top:539px;width:39px;height:20px;"><span class="t" style="left:1.6px">0</span><div class="bt"></div><svg width="6" height="11" viewBox="0 0 6 11"><path d="M0 3.2L3 0L6 3.2zM0 7.3L3 10.5L6 7.3z" fill="#000"/></svg></div>
<div class="a lbl" style="left:425px;top:544px;width:12px;text-align:right">G:</div>
<div class="a spin" style="left:444px;top:539px;width:39px;height:20px;"><span class="t" style="left:0.2px">214</span><div class="bt"></div><svg width="6" height="11" viewBox="0 0 6 11"><path d="M0 3.2L3 0L6 3.2zM0 7.3L3 10.5L6 7.3z" fill="#000"/></svg></div>
<div class="a lbl" style="left:340px;top:572px;width:12px;text-align:right">V:</div>
<div class="a spin" style="left:358px;top:567px;width:39px;height:20px;"><span class="t" style="left:1.6px">214</span><div class="bt"></div><svg width="6" height="11" viewBox="0 0 6 11"><path d="M0 3.2L3 0L6 3.2zM0 7.3L3 10.5L6 7.3z" fill="#000"/></svg></div>
<div class="a lbl" style="left:425px;top:572px;width:12px;text-align:right">B:</div>
<div class="a spin" style="left:444px;top:567px;width:39px;height:20px;border-color:#2c76c4;"><span class="t" style="left:0.2px">214</span><div class="bt"></div><svg width="6" height="11" viewBox="0 0 6 11"><path d="M0 3.2L3 0L6 3.2zM0 7.3L3 10.5L6 7.3z" fill="#000"/></svg></div>
<div class="a" style="left:464px;top:570px;width:1px;height:13px;background:#000"></div>
<div class="a btn" style="left:328px;top:590px;width:73px;height:21px;border:2px solid #0078d7;line-height:19px">OK</div>
<div class="a btn" style="left:409px;top:590px;width:73px;height:21px;line-height:21px;letter-spacing:-0.3px">Cancel</div>
<div class="a bbar"></div><div class="a bline"></div>
<div class="a lbl" style="left:85px;top:693px">x:</div><div class="a inp" style="left:101px;width:50px">23.478</div>
<div class="a lbl" style="left:155px;top:693px">y:</div><div class="a inp" style="left:172px;width:50px">21.672</div>
<div class="a lbl" style="left:226px;top:693px">w:</div><div class="a inp" style="left:245px;width:50px">525.545</div>
<svg style="left:303px;top:688px" width="17" height="20" viewBox="303 688 17 20">
<g transform="rotate(-9 311 701)">
<path d="M307.7 697.5V694.3C307.7 690.3 313.3 690.3 313.3 694.3V694.8" fill="none" stroke="#6d6d72" stroke-width="1.5"/>
<rect x="305.4" y="696.6" width="11.2" height="8.6" rx="1.3" fill="#6d6d72"/><circle cx="311" cy="699.9" r="1.25" fill="#f0f0f0"/><path d="M310.4 700H311.6L311.8 703.4H310.2z" fill="#f0f0f0"/>
</g></svg>
<div class="a lbl" style="left:328px;top:693px">h:</div><div class="a inp" style="left:344px;width:50px">195.048</div>
<div class="a lbl" style="left:399px;top:693px;letter-spacing:-0.3px">fill:</div>
<div class="a sw" style="left:419px;background:#d6d6d6"></div>
<div class="a lbl" style="left:454px;top:693px;letter-spacing:-0.1px">stroke:</div>
<div class="a sw" style="left:494px;background:#0000ff"></div>
<div class="a spin" style="left:529px;top:688px;width:49px;height:20px;"><span class="t" style="left:2.2px">2,00</span><div class="bt"></div><svg width="6" height="11" viewBox="0 0 6 11"><path d="M0 3.2L3 0L6 3.2zM0 7.3L3 10.5L6 7.3z" fill="#000"/></svg></div>
<div class="a" style="left:581px;top:688px;width:70px;height:20px;box-sizing:border-box;background:#e1e1e1;border:1px solid #adadad"></div>
<div class="a" style="left:586px;top:696.8px;width:46px;height:3.2px;background:#000"></div>
<svg style="left:637px;top:695px" width="9" height="6" viewBox="0 0 9 6"><path d="M0.5 0.8L4.5 4.8L8.5 0.8" fill="none" stroke="#444" stroke-width="1.1"/></svg>
<div class="a bsel" style="left:655px"></div>
<svg style="left:655px;top:687px" width="26" height="22" viewBox="655 687 26 22"><rect x="666.3" y="693.2" width="9.8" height="9.3" fill="#6d6d72"/><rect x="666.3" y="697.2" width="9.8" height="1.4" fill="#d4d4d4"/><rect x="660.8" y="695.8" width="5.4" height="4.7" fill="#fff" stroke="#6d6d72" stroke-width="1"/></svg>
<svg style="left:690px;top:692px" width="18" height="12" viewBox="690 692 18 12"><path d="M706.8 693.2H695.7A4.65 4.65 0 0 0 695.7 702.5H706.8z" fill="#6d6d72"/><rect x="699" y="697.2" width="7.9" height="1.4" fill="#d8d8d8"/><rect x="694.6" y="696" width="4.6" height="4" fill="#fff"/></svg>
<svg style="left:721px;top:692px" width="18" height="12" viewBox="721 692 18 12"><rect x="722" y="693.2" width="15.9" height="9.3" fill="#6d6d72"/><rect x="728.7" y="697.2" width="9.3" height="1.4" fill="#d8d8d8"/><rect x="724.3" y="696" width="4.6" height="4" fill="#fff"/></svg>
<div class="a bsel" style="left:748px"></div>
<svg style="left:748px;top:687px" width="26" height="22" viewBox="748 687 26 22"><path d="M752.9 705.8V690.3H769V695.4H758.6V705.8z" fill="#6d6d72"/></svg>
<svg style="left:783px;top:689px" width="18" height="18" viewBox="783 689 18 18"><path d="M783.9 705.8V697.3A7 7 0 0 1 790.9 690.3H799.9V695.4H791.8A2.2 2.2 0 0 0 789.6 697.6V705.8z" fill="#6d6d72"/></svg>
<svg style="left:814px;top:689px" width="18" height="18" viewBox="814 689 18 18"><path d="M814.9 705.8V698.1L822.7 690.3H831V695.4H820.6V705.8z" fill="#6d6d72"/></svg>
<svg style="left:439.1px;top:665.4px" width="32" height="32" viewBox="0 0 32 32"><circle cx="16" cy="16" r="13.65" fill="#fff" stroke="#991b16" stroke-width="3.9"/><path transform="translate(11.8 9.4)" d="M0.8 3.4C1.9 1.1 3.3 0 5 0C7.3 0 8.6 1.6 8.6 4.1C8.6 6.2 7.6 7.9 5.9 10.1L4.3 12.3H8.8V15.4H0V12.9L3.2 8.8C4.7 6.8 5.2 5.7 5.2 4.5C5.2 3.5 4.7 2.9 4 2.9C3.2 2.9 2.4 3.6 1.7 5.2z" fill="#000"/></svg>
</body></html>
